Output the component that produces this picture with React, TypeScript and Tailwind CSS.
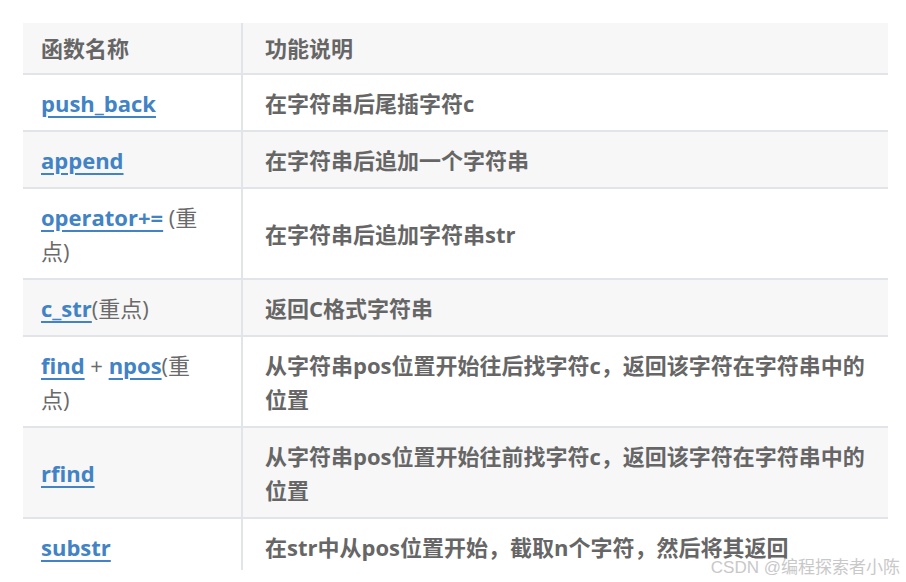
/**
 * string 成员函数表
 * Renders the function / description table with a watermark
 */

import React from "react";

const font = {
  fontFamily: '"Open Sans", "Noto Sans CJK SC", sans-serif',
};

function Link({ children }: { children: React.ReactNode }) {
  return (
    <span className="text-[#4183c4] underline decoration-[2px] underline-offset-[4px]">
      {children}
    </span>
  );
}

function Note({ children }: { children: React.ReactNode }) {
  return <span className="font-normal text-[#6a6a6a]">{children}</span>;
}

interface Row {
  name: React.ReactNode;
  desc: React.ReactNode;
  tall?: boolean;
}

const rows: Row[] = [
  { name: <Link>push_back</Link>, desc: "在字符串后尾插字符c" },
  { name: <Link>append</Link>, desc: "在字符串后追加一个字符串" },
  {
    name: (
      <>
        <Link>operator+=</Link> <Note>(重<br />点)</Note>
      </>
    ),
    desc: "在字符串后追加字符串str",
    tall: true,
  },
  {
    name: (
      <>
        <Link>c_str</Link>
        <Note>(重点)</Note>
      </>
    ),
    desc: "返回C格式字符串",
  },
  {
    name: (
      <>
        <Link>find</Link> <Note>+</Note> <Link>npos</Link>
        <Note>(重<br />点)</Note>
      </>
    ),
    desc: (
      <>
        从字符串pos位置开始往后找字符c，返回该字符在字符串中的
        <br />
        位置
      </>
    ),
    tall: true,
  },
  {
    name: <Link>rfind</Link>,
    desc: (
      <>
        从字符串pos位置开始往前找字符c，返回该字符在字符串中的
        <br />
        位置
      </>
    ),
    tall: true,
  },
  {
    name: <Link>substr</Link>,
    desc: "在str中从pos位置开始，截取n个字符，然后将其返回",
  },
];

export default function App() {
  return (
    <div
      className="relative w-[906px] h-[582px] bg-white overflow-hidden"
      style={font}
    >
      <div className="ml-[23px] mt-[23px] w-[865px] h-[547px] overflow-hidden text-[22px] leading-[34px] text-[#666666] font-bold">
        <div className="flex h-[52px] bg-[#f7f7f7] border-b-[2px] border-[#e1e4e8]">
          <div className="w-[218px] flex items-center pl-[18px]">函数名称</div>
          <div className="w-[2px] bg-[#e1e4e8]" />
          <div className="flex-1 flex items-center pl-[22px]">功能说明</div>
        </div>
        {rows.map((row, i) => (
          <div
            key={i}
            className={
              "flex border-b-[2px] border-[#e1e4e8] " +
              (i % 2 === 1 ? "bg-[#f7f7f7]" : "bg-white")
            }
          >
            <div
              className={
                "w-[218px] flex items-center pl-[18px] " +
                (row.tall ? "h-[89px]" : "h-[55px]")
              }
            >
              <div>{row.name}</div>
            </div>
            <div className="w-[2px] bg-[#e1e4e8]" />
            <div className="flex-1 flex items-center pl-[22px]">
              <div className="whitespace-nowrap">{row.desc}</div>
            </div>
          </div>
        ))}
      </div>
      <div
        className="absolute right-[6px] bottom-[3px] text-[17px] leading-[22px] text-[#c8c8c8]"
        style={{ fontFamily: '"Liberation Sans", "Noto Sans CJK SC", sans-serif' }}
      >
        CSDN @编程探索者小陈
      </div>
    </div>
  );
}
